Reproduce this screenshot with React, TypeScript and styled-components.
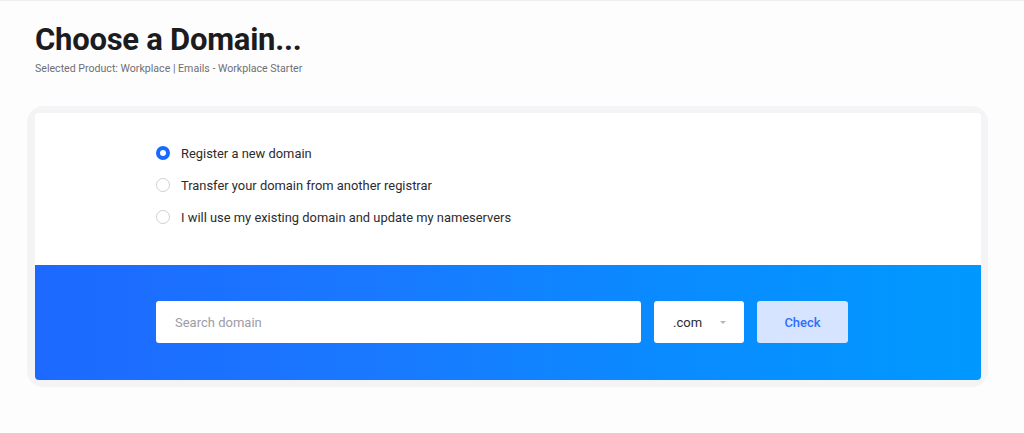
import React from "react";
import styled, { createGlobalStyle } from "styled-components";

const Global = createGlobalStyle`
  html, body { margin: 0; padding: 0; background: #fdfdfd; }
  body { font-family: Roboto, "Liberation Sans", Arial, sans-serif; border-top: 1px solid #efeff1; }
`;

const Page = styled.div`
  padding: 20px 0 0 0;
`;

const Header = styled.header`
  padding-left: 35px;
`;

const Title = styled.h1`
  margin: 0;
  font-size: 31px;
  line-height: 38px;
  font-weight: 700;
  color: #1c1c1e;
  letter-spacing: -0.25px;
`;

const Subtitle = styled.p`
  margin: 3px 0 0 0;
  font-size: 10.6px;
  line-height: 14px;
  color: #6f6f75;
`;

const CardFrame = styled.section`
  margin: 30px 0 0 27px;
  width: 961px;
  box-sizing: border-box;
  padding: 7px 7px 7px 8px;
  background: #f4f4f6;
  border-radius: 16px;
`;

const Card = styled.div`
  background: #ffffff;
  border-radius: 4px;
  overflow: hidden;
`;

const Options = styled.div`
  display: flex;
  flex-direction: column;
  gap: 12px;
  padding: 30px 0 30px 121px;
  height: 152px;
  box-sizing: border-box;
`;

const Option = styled.label`
  display: flex;
  align-items: center;
  gap: 11px;
  height: 20px;
  font-size: 12.9px;
  color: #2b2b2e;
  cursor: pointer;
`;

const Radio = styled.span<{ $checked?: boolean }>`
  width: 14px;
  height: 14px;
  border-radius: 50%;
  box-sizing: border-box;
  background: #fff;
  border: ${(p) => (p.$checked ? "4px solid #1769ff" : "1px solid #cfcfd5")};
  flex: none;
`;

const SearchBar = styled.div`
  display: flex;
  gap: 13px;
  padding: 36px 0 37px 121px;
  background: linear-gradient(90deg, #1d69ff 0%, #1a78ff 35%, #0b8aff 65%, #0099ff 100%);
`;

const SearchInput = styled.div`
  width: 485px;
  height: 42px;
  box-sizing: border-box;
  background: #fff;
  border-radius: 3px;
  display: flex;
  align-items: center;
  padding-left: 19px;
  font-size: 13px;
  color: #9d9da6;
`;

const Select = styled.div`
  width: 90px;
  height: 42px;
  box-sizing: border-box;
  background: #fff;
  border-radius: 3px;
  display: flex;
  align-items: center;
  justify-content: space-between;
  padding: 0 18px 0 19px;
  font-size: 13px;
  color: #2b2b2e;
`;

const Caret = styled.span`
  width: 0;
  height: 0;
  border-left: 3px solid transparent;
  border-right: 3px solid transparent;
  border-top: 3px solid #b5b5bb;
`;

const CheckButton = styled.button`
  width: 91px;
  height: 42px;
  border: none;
  border-radius: 3px;
  background: #d6e4ff;
  color: #2f6dff;
  font-family: inherit;
  font-size: 13px;
  font-weight: 500;
  cursor: pointer;
`;

const options = [
  { label: "Register a new domain", checked: true },
  { label: "Transfer your domain from another registrar", checked: false },
  { label: "I will use my existing domain and update my nameservers", checked: false },
];

export default function App() {
  return (
    <>
      <Global />
      <Page>
        <Header>
          <Title>Choose a Domain...</Title>
          <Subtitle>Selected Product: Workplace | Emails - Workplace Starter</Subtitle>
        </Header>
        <CardFrame>
          <Card>
            <Options>
              {options.map((o) => (
                <Option key={o.label}>
                  <Radio $checked={o.checked} />
                  {o.label}
                </Option>
              ))}
            </Options>
            <SearchBar>
              <SearchInput>Search domain</SearchInput>
              <Select>
                .com
                <Caret />
              </Select>
              <CheckButton>Check</CheckButton>
            </SearchBar>
          </Card>
        </CardFrame>
      </Page>
    </>
  );
}
